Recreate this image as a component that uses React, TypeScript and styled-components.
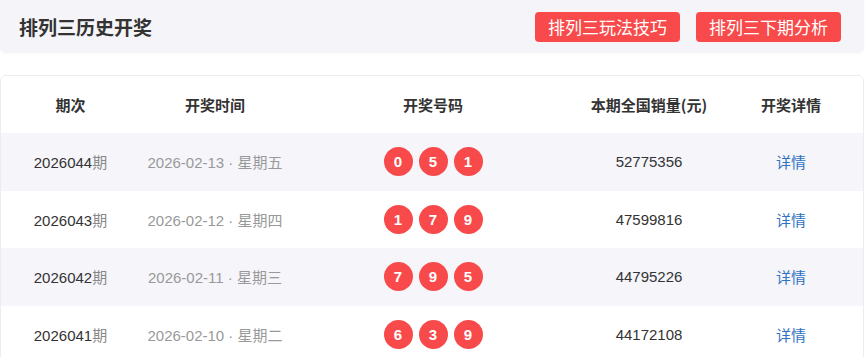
import React from "react";
import styled, { createGlobalStyle } from "styled-components";

const Global = createGlobalStyle`
  html, body { margin: 0; padding: 0; background: #ffffff; }
  body { font-family: "Liberation Sans", "Noto Sans CJK SC", Arial, sans-serif; }
`;

const Page = styled.div`
  width: 864px;
  display: flex;
  flex-direction: column;
  gap: 23px;
`;

const TopBar = styled.header`
  height: 52px;
  box-sizing: border-box;
  background: #f5f5f9;
  border-radius: 0 0 6px 6px;
  box-shadow: 0 1px 2px rgba(0, 0, 0, 0.06);
  display: flex;
  align-items: center;
  justify-content: space-between;
  padding: 0 23px 0 19px;
`;

const Title = styled.h1`
  margin: 0;
  font-family: "Noto Sans CJK SC", sans-serif;
  font-size: 19px;
  font-weight: 700;
  color: #333333;
`;

const Actions = styled.div`
  display: flex;
  gap: 16px;
  padding-top: 1px;
`;

const RedButton = styled.a`
  display: flex;
  align-items: center;
  justify-content: center;
  width: 145px;
  height: 30px;
  background: #f84a4a;
  color: #ffffff;
  border-radius: 4px;
  font-family: "Noto Sans CJK SC", sans-serif;
  font-size: 17px;
  text-decoration: none;
`;

const Card = styled.section`
  border: 1px solid #ececf0;
  border-radius: 6px;
  overflow: hidden;
  background: #ffffff;
`;

const Row = styled.div<{ $shade?: boolean; $head?: boolean }>`
  display: grid;
  grid-template-columns: 139px 150px 286px 146px 138px;
  align-items: center;
  height: ${(p) => (p.$head ? "57px" : "57.5px")};
  background: ${(p) => (p.$shade ? "#f5f5fa" : "#ffffff")};
`;

const HeadCell = styled.div`
  text-align: center;
  font-family: "Noto Sans CJK SC", sans-serif;
  font-size: 15px;
  font-weight: 700;
  color: #333333;
`;

const Cell = styled.div<{ $tone?: "dark" | "muted" }>`
  text-align: center;
  font-size: 15px;
  color: ${(p) => (p.$tone === "muted" ? "#999999" : "#333333")};
`;

const Suffix = styled.span`
  color: #888888;
  font-family: "Noto Sans CJK SC", sans-serif;
`;

const Cjk = styled.span`
  font-family: "Noto Sans CJK SC", sans-serif;
`;

const Balls = styled.div`
  display: flex;
  justify-content: center;
  gap: 6px;
`;

const Ball = styled.span`
  width: 29px;
  height: 29px;
  border-radius: 50%;
  background: #f84a4a;
  color: #ffffff;
  font-family: "Liberation Sans", Arial, sans-serif;
  font-weight: 700;
  font-size: 15px;
  display: flex;
  align-items: center;
  justify-content: center;
`;

const DetailLink = styled.a`
  display: block;
  text-align: center;
  font-family: "Noto Sans CJK SC", sans-serif;
  font-size: 15px;
  color: #2f72c3;
  text-decoration: none;
`;

const rows = [
  { issue: "2026044", date: "2026-02-13", week: "星期五", nums: [0, 5, 1], sales: "52775356" },
  { issue: "2026043", date: "2026-02-12", week: "星期四", nums: [1, 7, 9], sales: "47599816" },
  { issue: "2026042", date: "2026-02-11", week: "星期三", nums: [7, 9, 5], sales: "44795226" },
  { issue: "2026041", date: "2026-02-10", week: "星期二", nums: [6, 3, 9], sales: "44172108" },
];

export default function App() {
  return (
    <>
      <Global />
      <Page>
        <TopBar>
          <Title>排列三历史开奖</Title>
          <Actions>
            <RedButton href="#">排列三玩法技巧</RedButton>
            <RedButton href="#">排列三下期分析</RedButton>
          </Actions>
        </TopBar>
        <Card>
          <Row $head>
            <HeadCell>期次</HeadCell>
            <HeadCell>开奖时间</HeadCell>
            <HeadCell>开奖号码</HeadCell>
            <HeadCell>本期全国销量(元)</HeadCell>
            <HeadCell>开奖详情</HeadCell>
          </Row>
          {rows.map((r, i) => (
            <Row key={r.issue} $shade={i % 2 === 0}>
              <Cell>
                {r.issue}
                <Suffix>期</Suffix>
              </Cell>
              <Cell $tone="muted">
                {r.date} · <Cjk>{r.week}</Cjk>
              </Cell>
              <Balls>
                {r.nums.map((n, k) => (
                  <Ball key={k}>{n}</Ball>
                ))}
              </Balls>
              <Cell>{r.sales}</Cell>
              <DetailLink href="#">详情</DetailLink>
            </Row>
          ))}
        </Card>
      </Page>
    </>
  );
}
